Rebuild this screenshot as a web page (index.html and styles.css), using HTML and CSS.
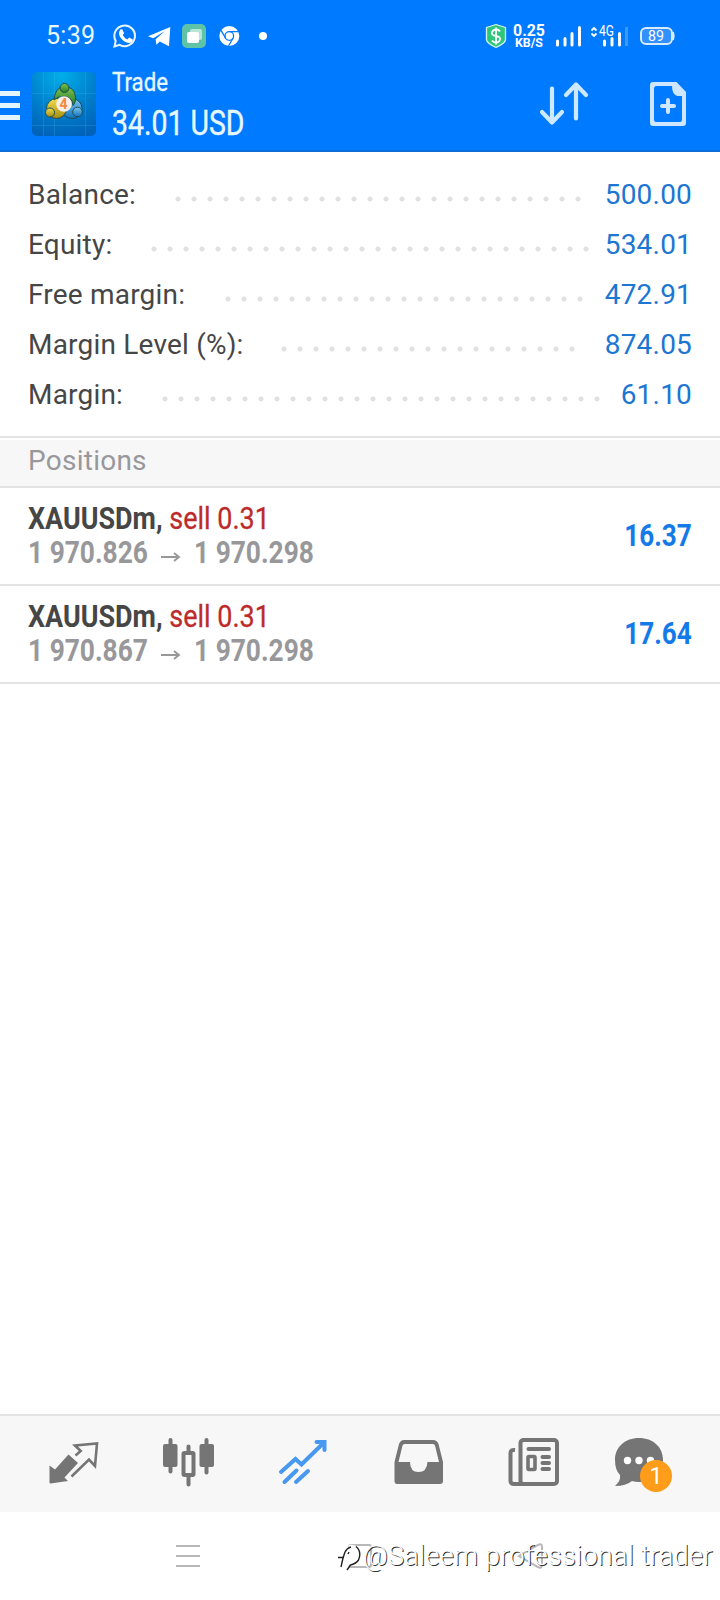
FILE: index.html
```html
<!DOCTYPE html>
<html lang="en">
<head>
<meta charset="utf-8">
<title>Trade</title>
<link rel="stylesheet" href="styles.css">
</head>
<body>
<header class="top">
  <div class="status">
    <span class="clock">5:39</span>
    <svg class="status-left" width="160" height="26" viewBox="112 23 160 26">
      <path d="M114.500 46.500l1.200-5.600a10.300 10.300 0 1 1 3.900 3.900z" fill="none" stroke="#e8f5ff" stroke-width="2"/>
      <path d="M120.300 29.500l2-.3 1.800 4-1.400 1.900q1.600 3 4.600 4.400l1.900-1.900 3.700 1.900q-.2 3.400-3.800 3.400-5-.5-8.300-4.900-3.200-4.500-.5-8.500z" fill="#fff"/>
      <path d="M148 36.300 170.300 27 169 46.300 159.800 41.500 156.400 44.700 155.600 39.200 165 31 153.300 38.200z" fill="#fff"/>
      <rect x="182" y="24" width="24" height="24" rx="5" fill="#5fc3a8"/>
      <rect x="190" y="29" width="12" height="11" rx="2" fill="#b9e4d8"/>
      <rect x="187" y="32" width="12" height="11" rx="2" fill="#fff"/>
      <circle cx="229.300" cy="36" r="10" fill="#fff"/>
      <g fill="none" stroke="#007aff" stroke-width="1.300">
        <circle cx="229.300" cy="36" r="4.300"/>
        <path d="M229.300 31.700H238.500M225.600 38.200 221 30.300M233 38.200 228.500 46"/>
      </g>
      <circle cx="263" cy="36" r="4" fill="#fff"/>
    </svg>
    <svg class="status-right" width="192" height="30" viewBox="484 21 192 30">
      <path d="M496 24.500 505.500 27.500v12q0 3.500-9.500 8-9.500-4.500-9.500-8v-12z" fill="#2ec77a" stroke="#d5f5ea" stroke-width="1.300" stroke-linejoin="round"/>
      <path d="M500 31.500q-1-2-4-2t-4 2.800 4 3.700 4 3.700-4 2.800-4-2M496 27.500v17" fill="none" stroke="#fff" stroke-width="1.800"/>
      <text class="speed" x="513" y="36" font-size="16.500" textLength="32" lengthAdjust="spacingAndGlyphs">0.25</text>
      <text class="speed" x="515" y="47" font-size="12" textLength="28" lengthAdjust="spacingAndGlyphs">KB/S</text>
      <path d="M557.500 41v4M565 38.500v6.500M572 33.500V45M579.500 27.500V45M604.500 41v4M612 38.500v6.500M619.500 33.500V45" stroke="#fff" stroke-width="3" stroke-linecap="round"/>
      <path d="M626.500 27v19" stroke="#3b99ff" stroke-width="3"/>
      <path d="M591.500 30.500l2.500-2.500 2.500 2.500M591.500 33.500l2.500 2.500 2.500-2.500" fill="none" stroke="#fff" stroke-width="1.800"/>
      <text class="net" x="599" y="36" font-size="14" textLength="15" lengthAdjust="spacingAndGlyphs">4G</text>
      <rect x="641" y="28" width="31" height="16" rx="5" fill="#3390ff" stroke="#d9ebff" stroke-width="2"/>
      <path d="M673 32q1.500 4 0 8" stroke="#d9ebff" stroke-width="2" fill="none"/>
      <text class="net" x="648" y="41" font-size="15" textLength="16" lengthAdjust="spacingAndGlyphs">89</text>
    </svg>
  </div>
  <div class="bar">
    <svg width="20" height="64" viewBox="0 72 20 64"><path d="M0 93.500h20M0 105.500h20M0 117.500h20" stroke="#e3f5ff" stroke-width="5"/></svg>
    <svg class="logo" width="64" height="64" viewBox="32 72 64 64">
      <defs>
        <radialGradient id="sky" cx=".45" cy=".05" r="1"><stop offset="0" stop-color="#00aeea"/><stop offset=".6" stop-color="#007bc9"/><stop offset="1" stop-color="#0062b8"/></radialGradient>
        <linearGradient id="gr" x2="0" y2="1"><stop stop-color="#7fc552"/><stop offset="1" stop-color="#237d25"/></linearGradient>
        <linearGradient id="ye" x2="0" y2="1"><stop stop-color="#f2df4d"/><stop offset="1" stop-color="#a58b12"/></linearGradient>
        <linearGradient id="bl" x2="0" y2="1"><stop stop-color="#7cc6ee"/><stop offset="1" stop-color="#1272bd"/></linearGradient>
      </defs>
      <rect x="32" y="72" width="64" height="64" rx="5" fill="url(#sky)"/>
      <path d="M43.500 72v64M54.500 72v64M85.500 72v64M32 93.500h64M32 125.500h64" stroke="#5cc5ee" stroke-opacity=".2"/>
      <g stroke="#204e53" stroke-width="1">
        <circle cx="72" cy="108.500" r="10" fill="url(#bl)"/>
        <circle cx="56.500" cy="108.500" r="10" fill="url(#ye)"/>
        <path d="M54 100q1-13 10.500-13.500Q75 87 75.500 97.500q.5 5-2.500 8-1-9-9-9-7 0-10 3.500z" fill="url(#gr)"/>
        <circle cx="64.500" cy="88" r="4.500" fill="url(#gr)"/>
        <circle cx="50" cy="112.500" r="4.500" fill="url(#ye)"/>
        <circle cx="77.500" cy="112" r="4.800" fill="url(#bl)"/>
      </g>
      <circle cx="64" cy="104" r="7.800" fill="#f6eee8"/>
      <text x="59.500" y="109" class="four" font-size="14">4</text>
    </svg>
    <div class="heading">
      <div class="title"><span class="cond">Trade</span></div>
      <div class="amount"><span class="cond">34.01 USD</span></div>
    </div>
    <svg class="actions" width="148" height="48" viewBox="538 80 148 48">
      <g fill="none" stroke="#cde9ff" stroke-width="4.200" stroke-linecap="round" stroke-linejoin="round">
        <path d="M552 88.500V122M542 112l10 10.500 10-10.500M576 118.500V85M566 95l10-10.500L586 95"/>
      </g>
      <path d="M653 82h23.500l9.500 10v31q0 3-3 3h-30q-3 0-3-3V85q0-3 3-3zm3.500 4q-2.500 0-2.500 2.500v31q0 2.500 2.500 2.500h23q2.500 0 2.500-2.500V96h-4.500q-5.500-1.500-5.500-10z" fill="#cfe6ff" fill-rule="evenodd"/>
      <path d="M668 100v12M662 106h12" stroke="#cfe6ff" stroke-width="4" stroke-linecap="round"/>
    </svg>
  </div>
</header>

<main>
  <section class="summary">
    <div class="row"><span class="label" style="width:141.500px">Balance:</span><i class="dots" style="width:416px"></i><span class="value">500.00</span></div>
    <div class="row"><span class="label" style="width:118px">Equity:</span><i class="dots" style="width:448px"></i><span class="value">534.01</span></div>
    <div class="row"><span class="label" style="width:192px">Free margin:</span><i class="dots" style="width:368px"></i><span class="value">472.91</span></div>
    <div class="row"><span class="label" style="width:248px">Margin Level (%):</span><i class="dots" style="width:304px"></i><span class="value">874.05</span></div>
    <div class="row"><span class="label" style="width:129px">Margin:</span><i class="dots" style="width:448px"></i><span class="value">61.10</span></div>
  </section>
  <h2 class="section-title">Positions</h2>
  <section>
    <div class="position">
      <div>
        <div class="symbol"><span class="cond"><b>XAUUSDm,</b> <span class="sell">sell 0.31</span></span></div>
        <div class="prices"><span class="cond">1 970.826</span><svg width="22" height="12" viewBox="0 0 22 12"><path d="M1 6h18M14 2l5 4-5 4" fill="none" stroke="#98989b" stroke-width="1.900"/></svg><span class="cond">1 970.298</span></div>
      </div>
      <div class="profit"><span class="cond">16.37</span></div>
    </div>
    <div class="position">
      <div>
        <div class="symbol"><span class="cond"><b>XAUUSDm,</b> <span class="sell">sell 0.31</span></span></div>
        <div class="prices"><span class="cond">1 970.867</span><svg width="22" height="12" viewBox="0 0 22 12"><path d="M1 6h18M14 2l5 4-5 4" fill="none" stroke="#98989b" stroke-width="1.900"/></svg><span class="cond">1 970.298</span></div>
      </div>
      <div class="profit"><span class="cond">17.64</span></div>
    </div>
  </section>
</main>

<nav class="tabs">
  <svg viewBox="44 1434 60 60">
    <path d="M49.500 1465.500 55 1469.500 68.500 1454.500 78 1463 64.500 1477.500 68 1481 50.500 1483.500q-1 0-1-1z" fill="#757575"/>
    <path d="M75.500 1455.500l5.200-4.500-5.700-5.500 22-2-2 22.500-6-6.500-17.500 17" fill="none" stroke="#757575" stroke-width="2.600"/>
  </svg>
  <svg viewBox="159 1434 60 60">
    <g fill="#757575"><rect x="163" y="1444" width="14.500" height="23" rx="2"/><rect x="199.500" y="1444" width="14.500" height="23" rx="2"/></g>
    <path d="M170.500 1440v31.500M206.500 1440v32.500M188.500 1446.500v6M188.500 1476v8.500" stroke="#757575" stroke-width="4" stroke-linecap="round"/>
    <rect x="183.500" y="1453" width="10" height="22" rx="1" fill="#f7f7f7" stroke="#757575" stroke-width="4"/>
  </svg>
  <svg viewBox="274 1434 60 60">
    <path d="M281 1472l14.500-13 6 5.500L323.500 1443M316.500 1442h8v8M284.500 1482l12-11.500M296 1482l12-11" fill="none" stroke="#4698f0" stroke-width="4" stroke-linecap="round"/>
    <path d="M318 1442h7v7z" fill="#4698f0"/>
  </svg>
  <svg viewBox="389 1434 60 60">
    <path d="M404 1440h29q4 0 5.500 4l4.500 18v19q0 3-3 3h-43q-2.500 0-2.500-3v-19l4.500-18q1.500-4 5-4zm.5 4q-1.500 0-2 1.500l-4 16.500h11.500q0 10 8.500 10t9-10h11.500l-4-16.500q-.5-1.500-2-1.500z" fill="#757575" fill-rule="evenodd"/>
  </svg>
  <svg viewBox="504 1434 60 60">
    <g fill="none" stroke="#757575" stroke-width="4">
      <rect x="520.500" y="1440" width="36.500" height="44" rx="3"/>
      <path d="M515 1450q-4.500-.5-4.500 3v28q0 3 4 3h12"/>
      <path d="M528.500 1449H549M542.500 1457h6.500M542.500 1463h6.500M542.500 1469h6.500" stroke-linecap="round"/>
      <rect x="528" y="1456.500" width="7" height="13" rx="1" stroke-width="3.600"/>
    </g>
  </svg>
  <div class="chat">
    <svg viewBox="610 1434 60 60">
      <path d="M639 1438c14 0 24 9 24 22s-10 22-24 22q-4 0-7-1-6 5-17 5 6-5 5-11-5-5-5-15c0-13 10-22 24-22z" fill="#757575"/>
      <g fill="#fff"><circle cx="627.500" cy="1460.500" r="3.700"/><circle cx="639" cy="1460.500" r="3.700"/><circle cx="650.500" cy="1460.500" r="3.700"/></g>
    </svg>
    <span class="badge">1</span>
  </div>
</nav>

<footer class="system">
  <svg class="keys" width="400" height="26" viewBox="176 1543 400 26">
    <g fill="none" stroke="#b8b8b8" stroke-width="2">
      <path d="M176 1546h24M176 1556h24M176 1566h24"/>
      <rect x="349" y="1545" width="22" height="22" rx="2"/>
      <path d="M519 1556l19-11q4-2 4 2v18q0 4-4 2z"/>
    </g>
  </svg>
  <div class="mark">
    <svg width="28" height="32" viewBox="334 1540 28 32">
      <path d="M349 1545q8-1 10 5 0 13-9 14l-4 5-2-5z" fill="#fff"/>
      <path d="M341 1567l2-9 2-6q2-4 6-5M338 1557.500h6M348 1554l1-2M356 1546.500q6 5 2.500 13.500-3 4-8 5l-3.500 5" fill="none" stroke="#222" stroke-width="1.400"/>
    </svg>
    <span class="handle">@Saleem professional trader</span>
  </div>
</footer>
</body>
</html>
```
FILE: styles.css
```css
* { box-sizing: border-box; }
body {
  margin: 0;
  width: 720px;
  height: 1600px;
  display: flex;
  flex-direction: column;
  overflow: hidden;
  background: #fff;
  font-family: Roboto, sans-serif;
  color: #464646;
}
svg { display: block; flex: none; }
.cond {
  display: inline-block;
  white-space: pre;
  transform: scaleX(.842);
  transform-origin: 0 50%;
}

.top { height: 152px; background: #007aff; border-bottom: 2px solid #0c6fdc; }
.status { height: 72px; padding: 21px 44px 0 46px; display: flex; }
.clock { width: 66px; font-size: 25px; line-height: 30px; color: #e8f8ff; letter-spacing: .3px; }
.status-left { margin-top: 2px; }
.status-right { margin-left: auto; }
.speed { fill: #fff; font-weight: 700; }
.net { fill: #fff; }
.bar { display: flex; height: 64px; }
.logo { margin-left: 12px; }
.four { fill: #f08a3c; font-weight: 700; }
.heading { margin-left: 16px; color: #e8f8ff; white-space: nowrap; }
.title { font-size: 26px; line-height: 28px; margin-top: -4px; }
.title .cond { transform: scaleX(.855); -webkit-text-stroke: .3px #e8f8ff; }
.amount { font-size: 34.5px; line-height: 40px; margin-top: 7px; }
.amount .cond { transform: scaleX(.824); -webkit-text-stroke: .4px #e8f8ff; }
.actions { margin: 8px 34px 0 auto; }

.summary { height: 286px; padding-top: 17px; border-bottom: 2px solid #e3e3e3; }
.row { height: 50px; padding: 0 28px; display: flex; align-items: center; font-size: 28px; letter-spacing: .2px; white-space: nowrap; }
.dots {
  flex: none;
  height: 6px;
  margin-top: 9px;
  background: radial-gradient(circle at 8px 3px, #e1e1e1 2.2px, transparent 2.9px) 0 0 / 16px 6px;
}
.value { margin-left: auto; color: #1c76d2; }
.section-title {
  margin: 0;
  height: 50px;
  padding: 0 28px;
  border-top: 2px solid #fff;
  border-bottom: 2px solid #e3e3e3;
  background: #f7f7f7;
  font-size: 28px;
  line-height: 41px;
  font-weight: 400;
  letter-spacing: .25px;
  color: #98989b;
}
.position {
  height: 98px;
  padding: 13px 28px 0;
  display: flex;
  justify-content: space-between;
  border-bottom: 2px solid #e3e3e3;
  font-size: 32px;
  line-height: 34px;
}
.sell { color: #bd2a2a; -webkit-text-stroke: .3px #bd2a2a; }
.prices { display: flex; align-items: center; font-weight: 700; color: #98989b; }
.prices .cond { transform: scaleX(.823); }
.prices svg { margin: 10px 12px 0 -14px; }
.profit { margin-top: 17px; font-weight: 700; color: #147ae8; }
.profit .cond { transform: scaleX(.815); transform-origin: 100% 50%; }

.tabs {
  margin-top: auto;
  height: 98px;
  padding: 18px 44px 0;
  display: flex;
  gap: 55px;
  border-top: 2px solid #e3e3e3;
  background: #f7f7f7;
}
.tabs svg { width: 60px; height: 60px; }
.chat { position: relative; margin-left: -9px; }
.badge {
  position: absolute;
  left: 30px;
  top: 26px;
  width: 32px;
  height: 32px;
  border-radius: 50%;
  background: #ff9d1b;
  color: #fff;
  font-size: 24px;
  line-height: 32px;
  text-align: center;
}

.system { position: relative; height: 88px; padding: 31px 0 0 176px; }
.mark { position: absolute; left: 334px; top: 28px; display: flex; align-items: center; }
.handle {
  margin-left: 1px;
  font-size: 27px;
  line-height: 32px;
  font-weight: 300;
  letter-spacing: .3px;
  color: #fff;
  white-space: nowrap;
  text-shadow: 1px 1px 0 #333;
}
```
